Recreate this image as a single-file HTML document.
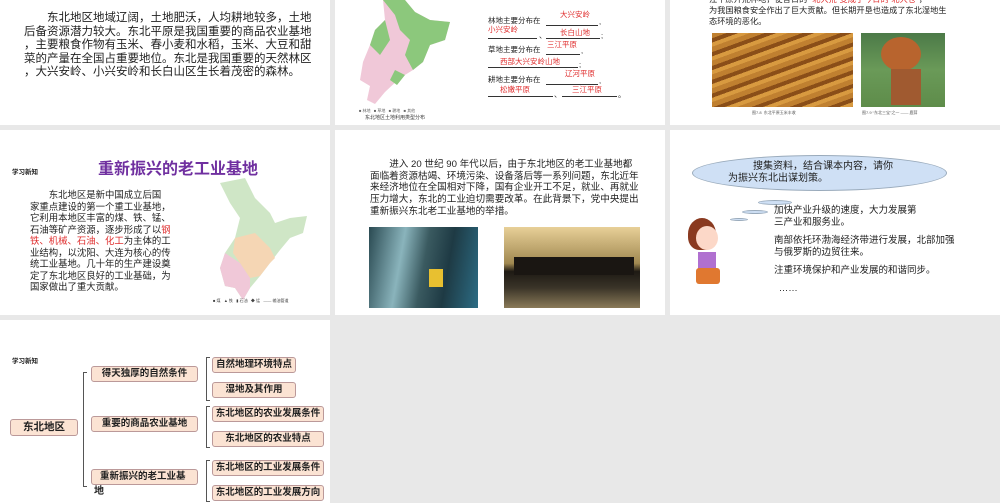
<!DOCTYPE html>
<html><head><meta charset="utf-8"><style>
*{margin:0;padding:0;box-sizing:border-box}
body{width:1000px;height:503px;background:#e8e8e8;position:relative;overflow:hidden;font-family:"Liberation Sans","Noto Sans CJK SC",sans-serif;color:#222}
.t{position:absolute;background:#fff;overflow:hidden}
.a{position:absolute;white-space:nowrap}
.r{color:#e03030}
.ln{position:absolute;height:0;border-top:1px solid #333}
.nw{white-space:nowrap}
.bx{position:absolute;background:#fbe3d3;border:1px solid #b99;border-radius:3px;font-weight:bold;font-size:9.5px;text-align:center;line-height:14px;white-space:nowrap}
.br{position:absolute;border:1px solid #555;border-right:none;width:4px}
</style></head><body>

<!-- row1 tile1 -->
<div class="t" style="left:0;top:0;width:330px;height:125px">
<div class="nw" style="position:absolute;left:24px;top:12px;font-size:11.5px;line-height:13.5px">&emsp;&emsp;东北地区地域辽阔，土地肥沃，人均耕地较多，土地<br>后备资源潜力较大。东北平原是我国重要的商品农业基地<br>，主要粮食作物有玉米、春小麦和水稻，玉米、大豆和甜<br>菜的产量在全国占重要地位。东北是我国重要的天然林区<br>，大兴安岭、小兴安岭和长白山区生长着茂密的森林。</div>
</div>

<!-- row1 tile2 -->
<div class="t" style="left:335px;top:0;width:330px;height:125px">
<svg style="position:absolute;left:20px;top:0" width="100" height="106" viewBox="0 0 100 106">
<path d="M28 0 L50 0 L60 12 L75 20 L95 22 L90 40 L75 45 L68 62 L58 70 L45 78 L30 92 L20 104 L12 100 L15 86 L5 80 L8 62 L15 45 L20 30 L30 20 Z" fill="#f0c8d8"/>
<path d="M28 0 L50 0 L60 12 L75 20 L95 22 L90 40 L75 45 L68 62 L58 70 L50 55 L55 40 L45 30 L40 15 Z" fill="#8cc87c"/>
<path d="M20 30 L30 20 L35 40 L25 55 L15 45Z M40 70 L50 75 L42 85 L35 80Z" fill="#8cc87c"/>
</svg>
<div class="a" style="left:24px;top:108px;font-size:4px;color:#666">■ 林地 &nbsp; ■ 草地 &nbsp; ■ 耕地 &nbsp; ■ 其他</div>
<div class="a" style="left:30px;top:114px;font-size:5px;color:#333">东北地区土地利用类型分布</div>
<div style="position:absolute;left:0;top:0;font-size:7.5px;line-height:9px">
<div class="a" style="left:153px;top:16px">林地主要分布在</div><div class="ln" style="left:211px;top:25px;width:52px"></div><div class="a" style="left:264px;top:17px">,</div>
<div class="a r" style="left:225px;top:10px">大兴安岭</div>
<div class="a r" style="left:153px;top:25px">小兴安岭</div>
<div class="ln" style="left:153px;top:38px;width:49px"></div><div class="a" style="left:204px;top:31px">、</div>
<div class="ln" style="left:211px;top:38px;width:54px"></div><div class="a" style="left:266px;top:31px">;</div>
<div class="a r" style="left:225px;top:28px">长白山地</div>
<div class="a" style="left:153px;top:45px">草地主要分布在</div><div class="ln" style="left:211px;top:54px;width:34px"></div><div class="a" style="left:246px;top:46px">,</div>
<div class="a r" style="left:212px;top:40px">三江平原</div>
<div class="a r" style="left:165px;top:57px">西部大兴安岭山地</div>
<div class="ln" style="left:153px;top:67px;width:90px"></div><div class="a" style="left:244px;top:60px">;</div>
<div class="a" style="left:153px;top:75px">耕地主要分布在</div><div class="ln" style="left:211px;top:84px;width:52px"></div><div class="a" style="left:264px;top:76px">,</div>
<div class="a r" style="left:230px;top:69px">辽河平原</div>
<div class="a r" style="left:165px;top:85px">松嫩平原</div>
<div class="ln" style="left:153px;top:96px;width:65px"></div><div class="a" style="left:219px;top:90px">、</div>
<div class="ln" style="left:227px;top:96px;width:55px"></div><div class="a" style="left:283px;top:90px">。</div>
<div class="a r" style="left:237px;top:85px">三江平原</div>
</div>
</div>

<!-- row1 tile3 -->
<div class="t" style="left:670px;top:0;width:330px;height:125px">
<div class="nw" style="position:absolute;left:39px;top:-6px;font-size:8.2px;line-height:11px">江平原开荒种地，使昔日的 <span class="r">“北大荒”变成了今日的“北大仓”</span>，<br>为我国粮食安全作出了巨大贡献。但长期开垦也造成了东北湿地生<br>态环境的恶化。</div>
<div style="position:absolute;left:42px;top:33px;width:141px;height:74px;background:repeating-linear-gradient(160deg,#c08030 0 5px,#8a4e18 5px 9px,#d89a40 9px 13px)"></div>
<div style="position:absolute;left:191px;top:33px;width:84px;height:74px;background:linear-gradient(#4c7a48,#6a9a58 50%,#5e8c4a)"><div style="position:absolute;left:20px;top:4px;width:40px;height:34px;border-radius:50%;background:#b8642e"></div><div style="position:absolute;left:30px;top:36px;width:30px;height:36px;background:#a05a30"></div></div>
<div class="a" style="left:82px;top:110px;font-size:4px;color:#555">图7.8 &nbsp;东北平原玉米丰收</div>
<div class="a" style="left:192px;top:110px;font-size:4px;color:#555">图7.9 “东北三宝”之一 —— 鹿茸</div>
</div>

<!-- row2 tile1 -->
<div class="t" style="left:0;top:130px;width:330px;height:185px">
<div class="a" style="left:12px;top:36px;font-size:6.5px;font-weight:bold">学习新知</div>
<div class="a" style="left:98px;top:25px;font-size:16px;font-weight:bold;color:#7030a0">重新振兴的老工业基地</div>
<div class="nw" style="position:absolute;left:30px;top:59px;font-size:9.4px;line-height:11.5px">&emsp;&emsp;东北地区是新中国成立后国<br>家重点建设的第一个重工业基地，<br>它利用本地区丰富的煤、铁、锰、<br>石油等矿产资源，逐步形成了以<span class="r">钢</span><br><span class="r">铁、机械、石油、化工</span>为主体的工<br>业结构，以沈阳、大连为核心的传<br>统工业基地。几十年的生产建设奠<br>定了东北地区良好的工业基础，为<br>国家做出了重大贡献。</div>
<svg style="position:absolute;left:215px;top:48px" width="100" height="125" viewBox="0 0 100 125">
<path d="M5 5 L30 0 L40 20 L55 35 L60 45 L75 40 L92 38 L88 55 L75 60 L65 72 L55 85 L45 98 L35 110 L28 122 L20 110 L10 108 L5 90 L10 75 L20 60 L25 40 L15 25Z" fill="#cfe6c6"/>
<path d="M20 60 L40 55 L55 70 L60 80 L55 85 L45 98 L35 100 L25 85 L18 75Z" fill="#f5d6b4"/>
<path d="M10 75 L25 85 L35 100 L35 110 L28 122 L20 110 L10 108 L5 90Z" fill="#f0c8d8"/>
</svg>
<div class="a" style="left:213px;top:168px;font-size:4px;color:#444">■ 煤 &nbsp; ▲ 铁 &nbsp; ▮ 石油 &nbsp; ◆ 锰 &nbsp; —— 输油管道</div>
</div>

<!-- row2 tile2 -->
<div class="t" style="left:335px;top:130px;width:330px;height:185px">
<div class="nw" style="position:absolute;left:35px;top:29px;font-size:9.6px;line-height:11.7px">&emsp;&emsp;进入 20 世纪 90 年代以后，由于东北地区的老工业基地都<br>面临着资源枯竭、环境污染、设备落后等一系列问题，东北近年<br>来经济地位在全国相对下降，国有企业开工不足，就业、再就业<br>压力增大，东北的工业迫切需要改革。在此背景下，党中央提出<br>重新振兴东北老工业基地的举措。</div>
<div style="position:absolute;left:34px;top:97px;width:109px;height:81px;background:linear-gradient(100deg,#2a4a52,#8ab4bc 30%,#3a5a60 50%,#1e3a44 70%,#2c6c84)"><div style="position:absolute;left:60px;top:42px;width:14px;height:18px;background:#e8c030"></div></div>
<div style="position:absolute;left:169px;top:97px;width:136px;height:81px;background:linear-gradient(#e8d098,#a08850 45%,#1e1a14 55%,#3a3428 75%,#8a7a58)"><div style="position:absolute;left:10px;top:30px;width:120px;height:18px;background:#1a1612"></div></div>
</div>

<!-- row2 tile3 -->
<div class="t" style="left:670px;top:130px;width:330px;height:185px">
<div style="position:absolute;left:22px;top:25px;width:255px;height:36px;border-radius:50%;background:#cfe0f5;border:1px solid #9ab"></div>
<div style="position:absolute;left:88px;top:70px;width:34px;height:5px;border-radius:50%;background:#cfe0f5;border:1px solid #9ab"></div>
<div style="position:absolute;left:72px;top:80px;width:26px;height:4px;border-radius:50%;background:#cfe0f5;border:1px solid #9ab"></div>
<div style="position:absolute;left:60px;top:88px;width:18px;height:3px;border-radius:50%;background:#cfe0f5;border:1px solid #9ab"></div>
<div class="a" style="left:58px;top:31px;font-size:10px;line-height:12px">&emsp;&emsp;&ensp;搜集资料，结合课本内容，请你<br>为振兴东北出谋划策。</div>
<div style="position:absolute;left:18px;top:88px;width:28px;height:32px;border-radius:50% 50% 40% 40%;background:#8a3a20"></div>
<div style="position:absolute;left:26px;top:96px;width:22px;height:24px;border-radius:50%;background:#fcd8c8"></div>
<div style="position:absolute;left:28px;top:122px;width:18px;height:18px;background:#b070d0"></div>
<div style="position:absolute;left:26px;top:138px;width:24px;height:16px;background:#e07830;border-radius:3px"></div>
<div class="nw" style="position:absolute;left:104px;top:75px;font-size:9.5px;line-height:12px">加快产业升级的速度，大力发展第<br>三产业和服务业。<br><div style="height:6px"></div>南部依托环渤海经济带进行发展，北部加强<br>与俄罗斯的边贸往来。<br><div style="height:6px"></div>注重环境保护和产业发展的和谐同步。<br><div style="height:6px"></div>&ensp;……</div>
</div>

<!-- row3 tile1 -->
<div class="t" style="left:0;top:320px;width:330px;height:183px">
<div class="a" style="left:12px;top:35px;font-size:6.5px;font-weight:bold">学习新知</div>
<div class="bx" style="left:10px;top:99px;width:68px;height:17px;line-height:15px;font-size:10.5px">东北地区</div>
<div class="br" style="left:83px;top:52px;height:115px"></div>
<div class="bx" style="left:91px;top:46px;width:107px;height:16px">得天独厚的自然条件</div>
<div class="bx" style="left:91px;top:96px;width:107px;height:16px">重要的商品农业基地</div>
<div class="bx" style="left:91px;top:149px;width:107px;height:16px;text-align:left;padding-left:8px">重新振兴的老工业基</div>
<div class="a" style="left:94px;top:162px;font-size:10px;font-weight:bold">地</div>
<div class="br" style="left:206px;top:37px;height:44px"></div>
<div class="br" style="left:206px;top:86px;height:42px"></div>
<div class="br" style="left:206px;top:140px;height:42px"></div>
<div class="bx" style="left:212px;top:37px;width:84px;height:16px">自然地理环境特点</div>
<div class="bx" style="left:212px;top:62px;width:84px;height:16px">湿地及其作用</div>
<div class="bx" style="left:212px;top:86px;width:112px;height:16px">东北地区的农业发展条件</div>
<div class="bx" style="left:212px;top:111px;width:112px;height:16px">东北地区的农业特点</div>
<div class="bx" style="left:212px;top:140px;width:112px;height:16px">东北地区的工业发展条件</div>
<div class="bx" style="left:212px;top:165px;width:112px;height:16px">东北地区的工业发展方向</div>
</div>
</body></html>
